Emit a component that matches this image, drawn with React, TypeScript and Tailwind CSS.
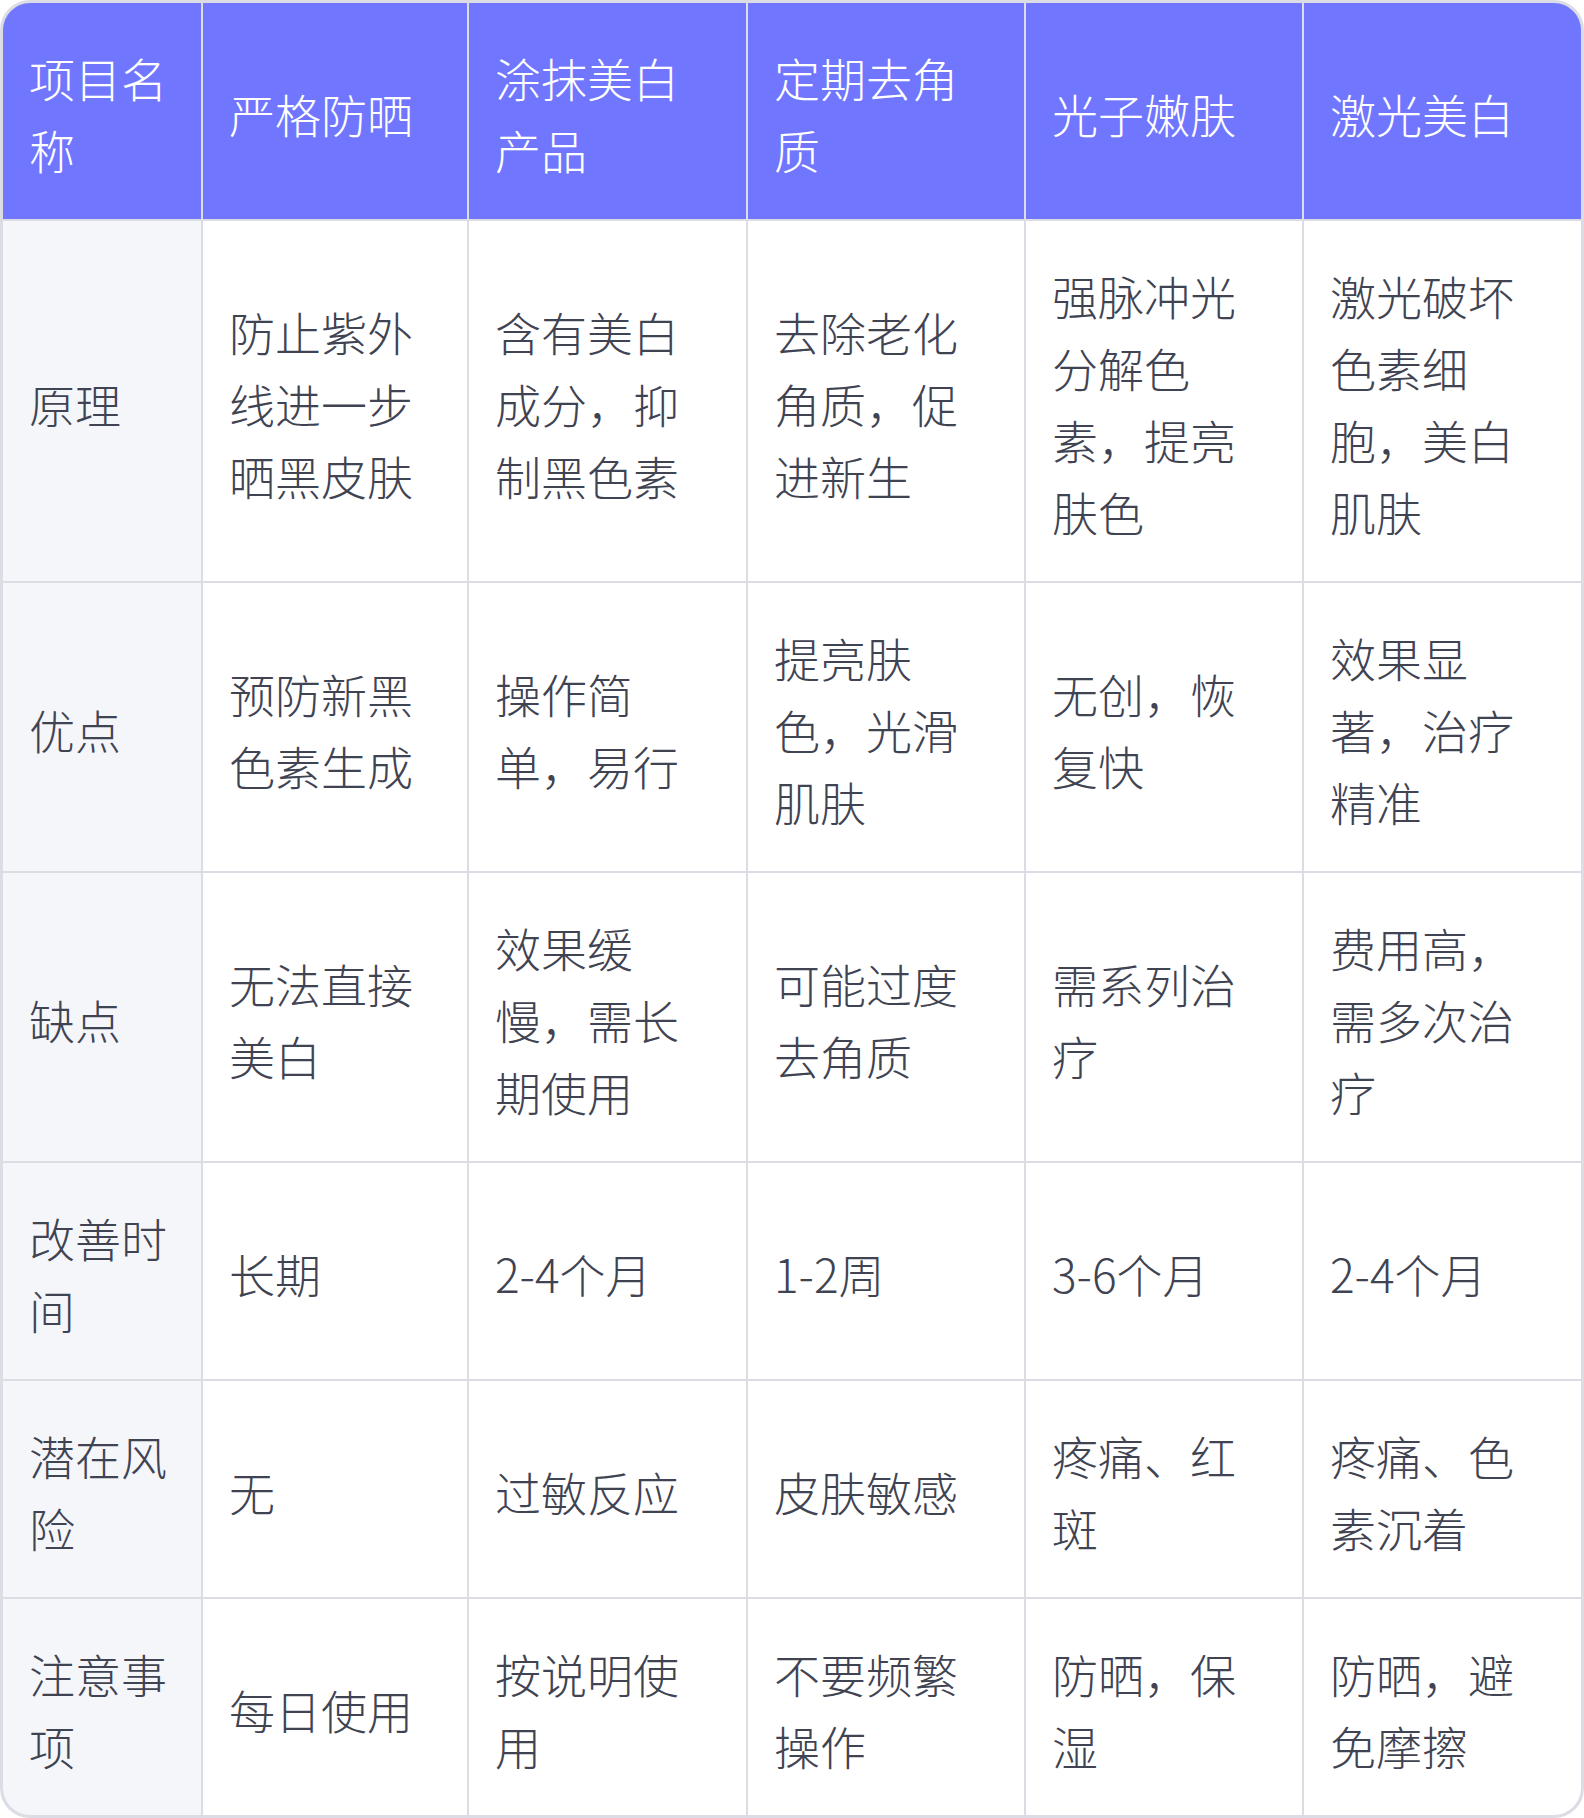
const header = ['项目名称', '严格防晒', '涂抹美白产品', '定期去角质', '光子嫩肤', '激光美白']

const rows = [
  ['原理', '防止紫外线进一步晒黑皮肤', '含有美白成分，抑制黑色素', '去除老化角质，促进新生', '强脉冲光分解色素，提亮肤色', '激光破坏色素细胞，美白肌肤'],
  ['优点', '预防新黑色素生成', '操作简单，易行', '提亮肤色，光滑肌肤', '无创，恢复快', '效果显著，治疗精准'],
  ['缺点', '无法直接美白', '效果缓慢，需长期使用', '可能过度去角质', '需系列治疗', '费用高，需多次治疗'],
  ['改善时间', '长期', '2-4个月', '1-2周', '3-6个月', '2-4个月'],
  ['潜在风险', '无', '过敏反应', '皮肤敏感', '疼痛、红斑', '疼痛、色素沉着'],
  ['注意事项', '每日使用', '按说明使用', '不要频繁操作', '防晒，保湿', '防晒，避免摩擦'],
]

export default function App() {
  return (
    <div
      className="w-[1584px] font-light"
      style={{ fontFamily: '"Noto Sans CJK SC", "Noto Sans", sans-serif' }}
    >
      <div className="rounded-[30px] overflow-hidden border-[3px] border-[#dcdde4] bg-[#dcdde4]">
        <div className="grid grid-cols-[198px_264px_277px_276px_276px_1fr] gap-[2px] text-[46px] leading-[72px]">
          {header.map((h, i) => (
            <div
              key={h}
              className={`bg-[#7077fe] text-white flex items-center pt-[38px] pb-[34px] pl-[26px] ${i === 0 ? 'pr-4' : 'pr-8'}`}
            >
              {h}
            </div>
          ))}
          {rows.map((row) =>
            row.map((cell, i) => (
              <div
                key={row[0] + i}
                className={`flex items-center pt-[38px] pb-[34px] pl-[26px] text-[#404352] ${
                  i === 0 ? 'pr-4 bg-[#f5f6fa]' : 'pr-8 bg-white'
                }`}
              >
                {cell}
              </div>
            ))
          )}
        </div>
      </div>
    </div>
  )
}
